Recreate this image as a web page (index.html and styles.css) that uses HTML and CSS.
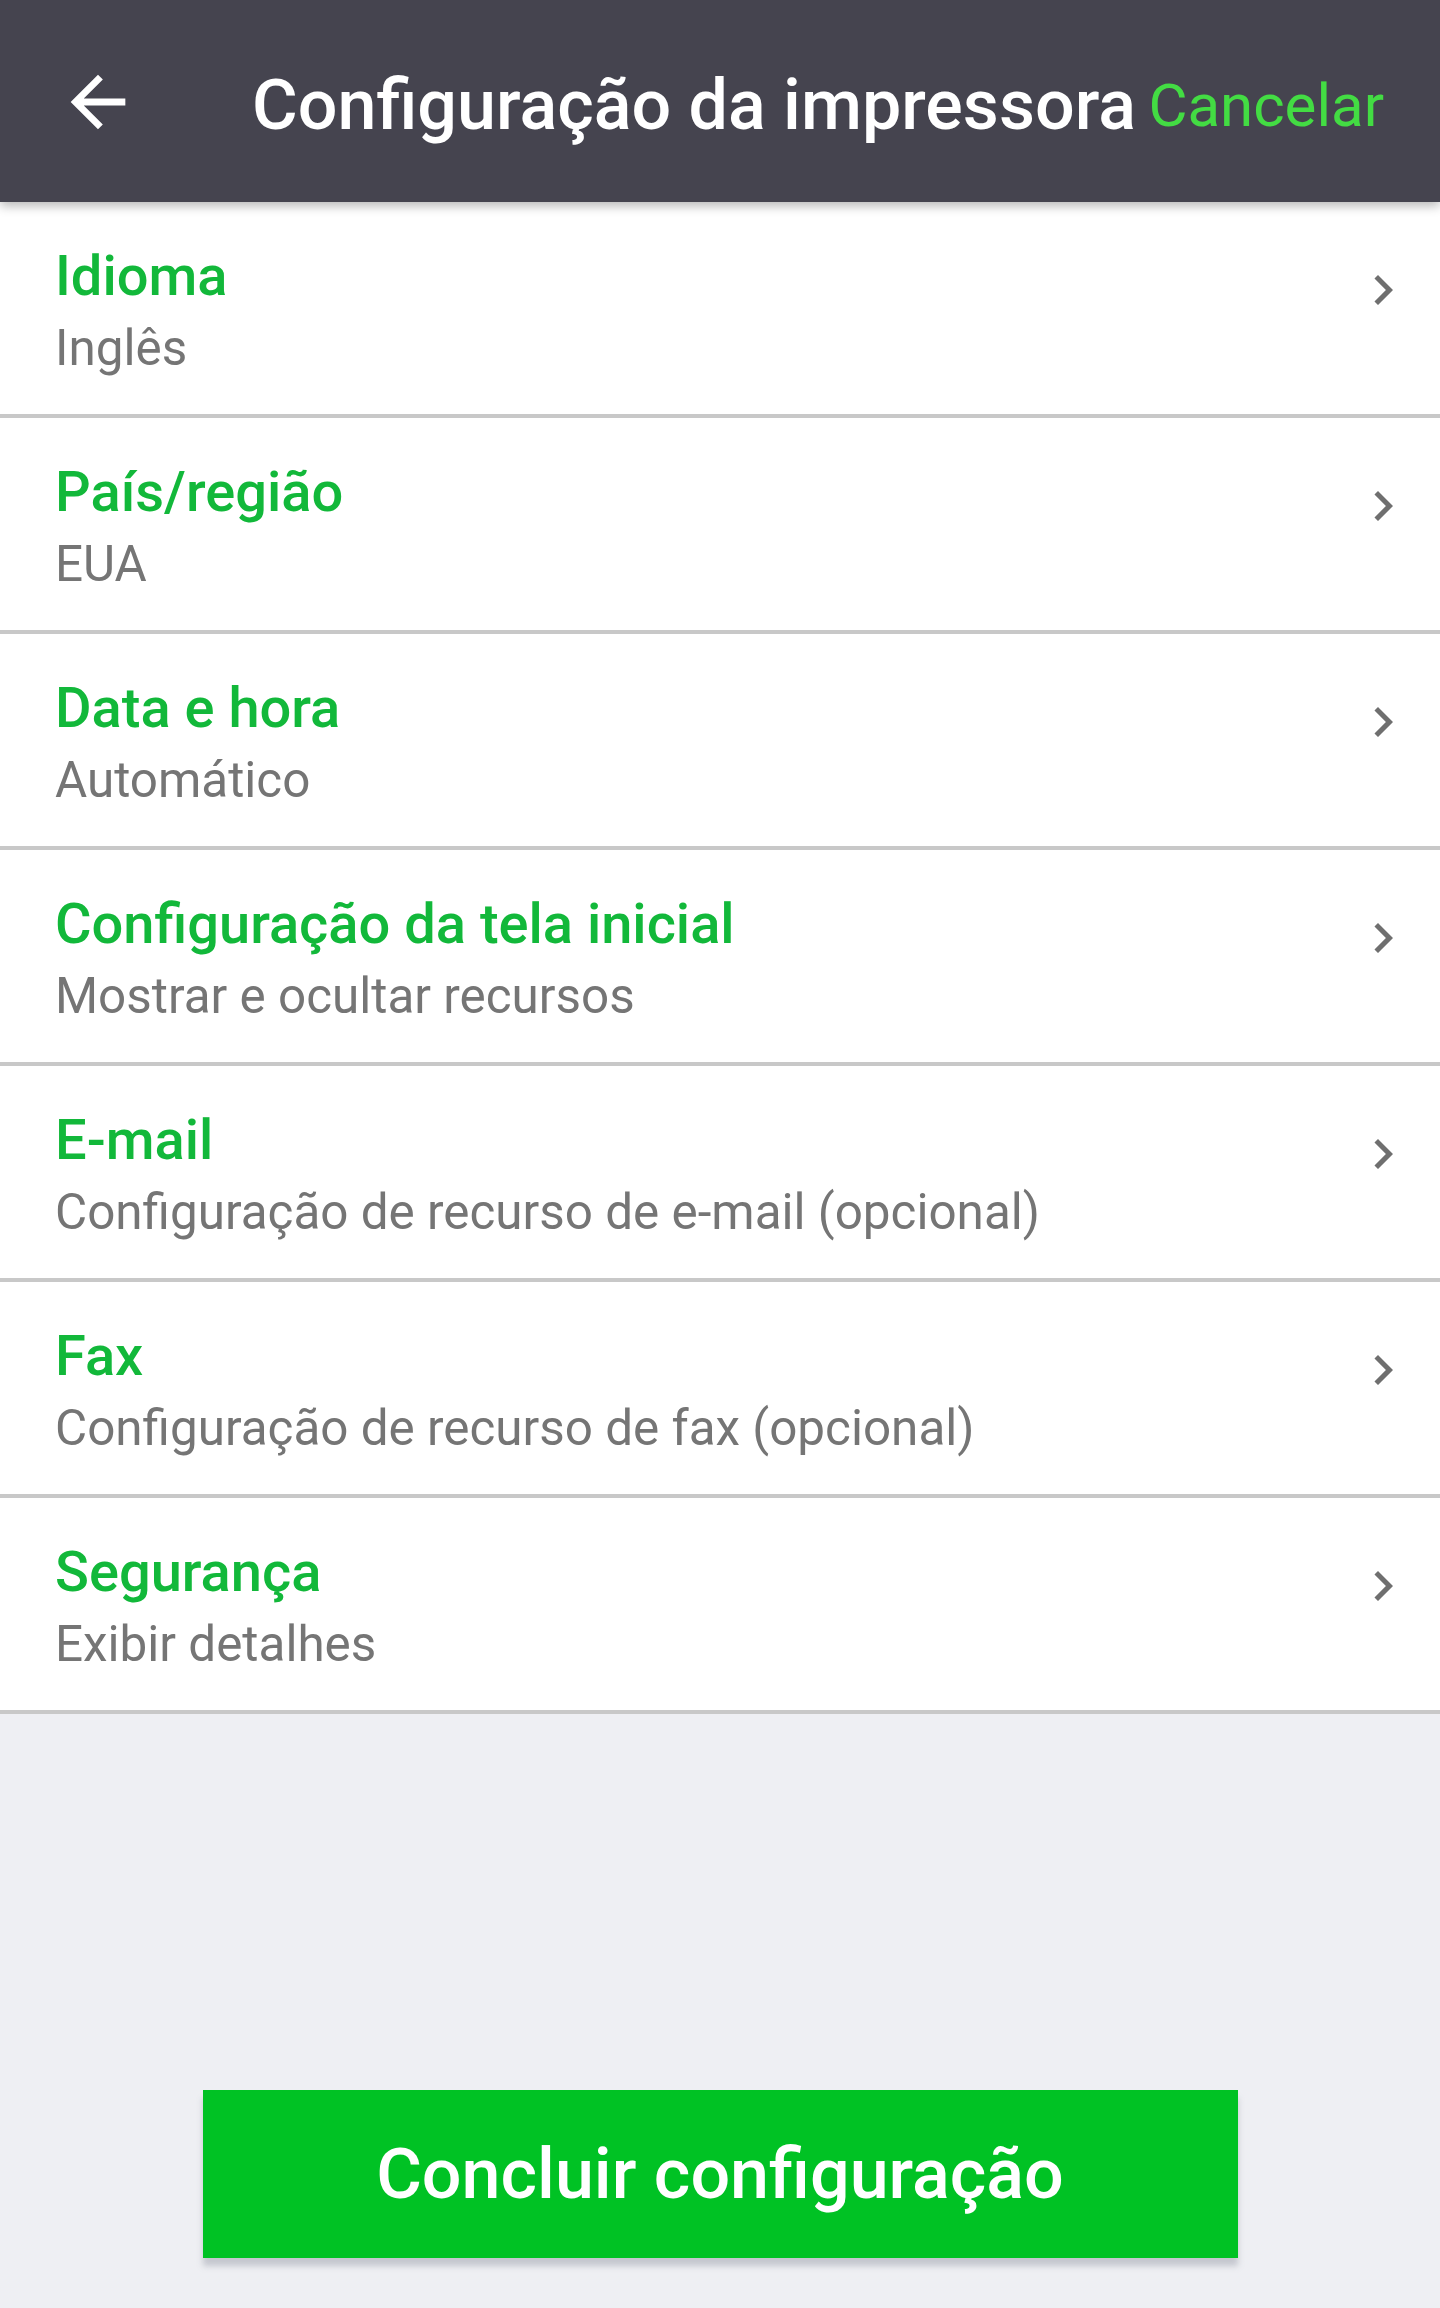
FILE: index.html
```html
<!DOCTYPE html>
<html lang="pt-BR">
<head>
<meta charset="utf-8">
<title>Configuração da impressora</title>
<link rel="stylesheet" href="styles.css">
</head>
<body>
<div class="screen">
  <header class="topbar">
    <button class="back" aria-label="Voltar">
      <svg viewBox="0 0 24 24" width="82" height="82"><path fill="#ffffff" d="M20 11H7.83l5.59-5.59L12 4l-8 8 8 8 1.41-1.41L7.83 13H20v-2z"/></svg>
    </button>
    <h1 class="title">Configuração da impressora</h1>
    <span class="cancel">Cancelar</span>
  </header>

  <ul class="list">
    <li class="row">
      <div class="texts"><div class="label">Idioma</div><div class="value">Inglês</div></div>
      <svg class="chev" viewBox="0 0 24 24" width="60" height="60"><path d="M10 6L8.59 7.41 13.17 12l-4.58 4.59L10 18l6-6z"/></svg>
    </li>
    <li class="row">
      <div class="texts"><div class="label">País/região</div><div class="value">EUA</div></div>
      <svg class="chev" viewBox="0 0 24 24" width="60" height="60"><path d="M10 6L8.59 7.41 13.17 12l-4.58 4.59L10 18l6-6z"/></svg>
    </li>
    <li class="row">
      <div class="texts"><div class="label">Data e hora</div><div class="value">Automático</div></div>
      <svg class="chev" viewBox="0 0 24 24" width="60" height="60"><path d="M10 6L8.59 7.41 13.17 12l-4.58 4.59L10 18l6-6z"/></svg>
    </li>
    <li class="row">
      <div class="texts"><div class="label">Configuração da tela inicial</div><div class="value">Mostrar e ocultar recursos</div></div>
      <svg class="chev" viewBox="0 0 24 24" width="60" height="60"><path d="M10 6L8.59 7.41 13.17 12l-4.58 4.59L10 18l6-6z"/></svg>
    </li>
    <li class="row">
      <div class="texts"><div class="label">E-mail</div><div class="value">Configuração de recurso de e-mail (opcional)</div></div>
      <svg class="chev" viewBox="0 0 24 24" width="60" height="60"><path d="M10 6L8.59 7.41 13.17 12l-4.58 4.59L10 18l6-6z"/></svg>
    </li>
    <li class="row">
      <div class="texts"><div class="label">Fax</div><div class="value">Configuração de recurso de fax (opcional)</div></div>
      <svg class="chev" viewBox="0 0 24 24" width="60" height="60"><path d="M10 6L8.59 7.41 13.17 12l-4.58 4.59L10 18l6-6z"/></svg>
    </li>
    <li class="row">
      <div class="texts"><div class="label">Segurança</div><div class="value">Exibir detalhes</div></div>
      <svg class="chev" viewBox="0 0 24 24" width="60" height="60"><path d="M10 6L8.59 7.41 13.17 12l-4.58 4.59L10 18l6-6z"/></svg>
    </li>
  </ul>

  <div class="footer">
    <button class="done">Concluir configuração</button>
  </div>
</div>
</body>
</html>
```

FILE: styles.css
```css
* { box-sizing: border-box; }

html, body {
  margin: 0;
  padding: 0;
  background: #eeeff3;
}

body {
  font-family: Roboto, "Noto Sans", "Liberation Sans", sans-serif;
}

.screen {
  display: flex;
  flex-direction: column;
  height: 2308px;
  width: 1440px;
}

.topbar {
  position: relative;
  z-index: 2;
  height: 202px;
  flex: 0 0 202px;
  background: #45444f;
  display: flex;
  align-items: center;
  padding: 0 56px 0 57px;
  box-shadow: 0 4px 10px rgba(0, 0, 0, 0.28);
}

.back {
  width: 82px;
  height: 82px;
  padding: 0;
  border: 0;
  background: transparent;
  display: block;
  margin-top: 2px;
}

.back svg { display: block; }

.title {
  margin: 8px 0 0 113px;
  font-size: 70px;
  font-weight: 500;
  color: #ffffff;
  white-space: nowrap;
  line-height: 1;
}

.cancel {
  margin-left: auto;
  font-size: 60px;
  font-weight: 400;
  color: #43dc43;
  line-height: 1;
  margin-top: 10px;
}

.list {
  list-style: none;
  margin: 0;
  padding: 0;
  background: #ffffff;
}

.row {
  display: flex;
  align-items: flex-start;
  height: 216px;
  padding: 41px 27px 0 55px;
  border-bottom: 4px solid #c8c8c8;
}

.texts {
  flex: 1;
}

.label {
  font-size: 56px;
  font-weight: 500;
  color: #12b83a;
  line-height: 66px;
}

.value {
  margin-top: 11px;
  font-size: 49.4px;
  font-weight: 400;
  color: #757575;
  line-height: 56px;
}

.chev {
  display: block;
  margin-top: 17px;
  fill: #6f6f6f;
}

.footer {
  flex: 1;
  display: flex;
  align-items: flex-end;
  justify-content: center;
  padding-bottom: 50px;
}

.done {
  width: 1035px;
  height: 168px;
  border: 0;
  background: #00c224;
  color: #ffffff;
  font-family: Roboto, "Noto Sans", "Liberation Sans", sans-serif;
  font-size: 70px;
  font-weight: 500;
  box-shadow: 0 8px 6px rgba(120, 125, 140, 0.35);
}
```
